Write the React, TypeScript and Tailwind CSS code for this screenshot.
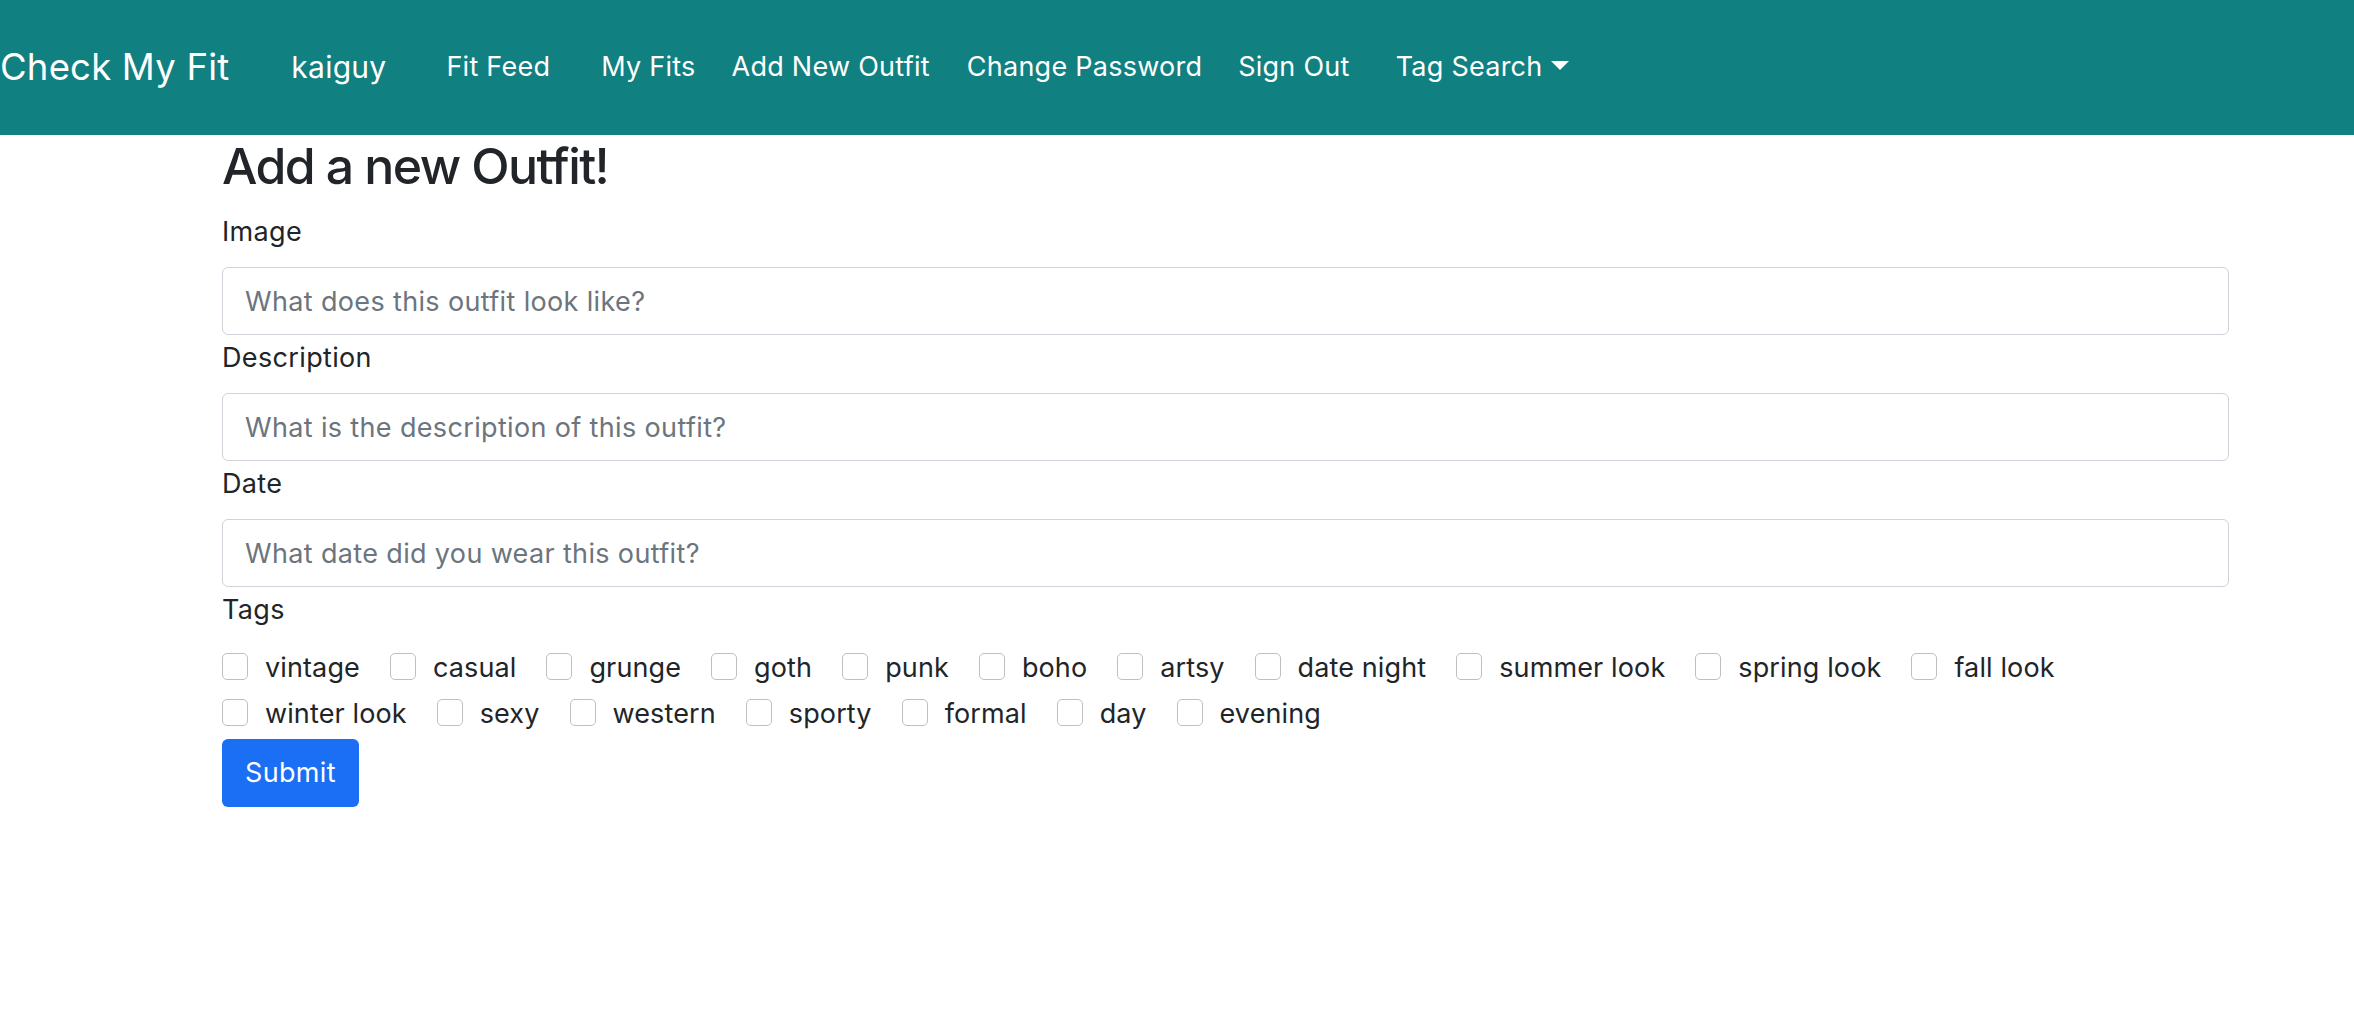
import React from "react";

const tags = [
    "vintage",
    "casual",
    "grunge",
    "goth",
    "punk",
    "boho",
    "artsy",
    "date night",
    "summer look",
    "spring look",
    "fall look",
    "winter look",
    "sexy",
    "western",
    "sporty",
    "formal",
    "day",
    "evening",
];

const fields = [
    { label: "Image", placeholder: "What does this outfit look like?" },
    { label: "Description", placeholder: "What is the description of this outfit?" },
    { label: "Date", placeholder: "What date did you wear this outfit?" },
];

function Label({ children }: { children: React.ReactNode }) {
    return (
        <label className="block pt-[3px] mb-[16px] text-[27px] tracking-[0.35px] leading-[39px] text-[#212529]">
            {children}
        </label>
    );
}

function Navbar() {
    return (
        <nav className="h-[135px] bg-[#118080] text-white flex items-center text-[27px] tracking-[0.25px] leading-[1.5]">
            <span className="text-[36.5px] tracking-[0.2px]">Check My Fit</span>
            <span className="ml-[62px] text-[30px]">kaiguy</span>
            <a className="ml-[60px]">Fit Feed</a>
            <a className="ml-[51px]">My Fits</a>
            <a className="ml-[36px]">Add New Outfit</a>
            <a className="ml-[37px]">Change Password</a>
            <a className="ml-[36px]">Sign Out</a>
            <a className="ml-[46px] flex items-center">
                Tag Search
                <span className="ml-[8px] mb-[4px] w-0 h-0 border-t-[9px] border-t-white border-x-[9px] border-x-transparent" />
            </a>
        </nav>
    );
}

export default function App() {
    return (
        <div className="min-h-screen bg-white [font-family:Inter,'Noto_Sans',sans-serif]">
            <Navbar />
            <main className="ml-[222px] w-[2007px]">
                <h3 className="text-[50px] font-medium tracking-[-1.6px] leading-[62px] text-[#212529] mb-[12px]">
                    Add a new Outfit!
                </h3>
                <form>
                    {fields.map((f) => (
                        <div key={f.label}>
                            <Label>{f.label}</Label>
                            <input
                                type="text"
                                placeholder={f.placeholder}
                                className="block w-full h-[68px] px-[22px] text-[27px] tracking-[0.35px] text-[#212529] border border-[#ced4da] rounded-[6px] placeholder:text-[#6c757d] outline-none"
                            />
                        </div>
                    ))}
                    <Label>Tags</Label>
                    <div className="flex flex-wrap">
                        {tags.map((t) => (
                            <div key={t} className="flex items-start h-[46px] mr-[30px]">
                                <span className="mt-[8px] w-[26px] h-[27px] border border-[#bfbfbf] rounded-[5px] bg-white" />
                                <span className="ml-[17px] text-[27px] tracking-[0.12px] leading-[46px] text-[#212529]">
                                    {t}
                                </span>
                            </div>
                        ))}
                    </div>
                    <button
                        type="button"
                        className="mt-[2px] h-[68px] px-[23px] rounded-[6px] bg-[#1b6ff5] text-white text-[27px] tracking-[0.35px]"
                    >
                        Submit
                    </button>
                </form>
            </main>
        </div>
    );
}
